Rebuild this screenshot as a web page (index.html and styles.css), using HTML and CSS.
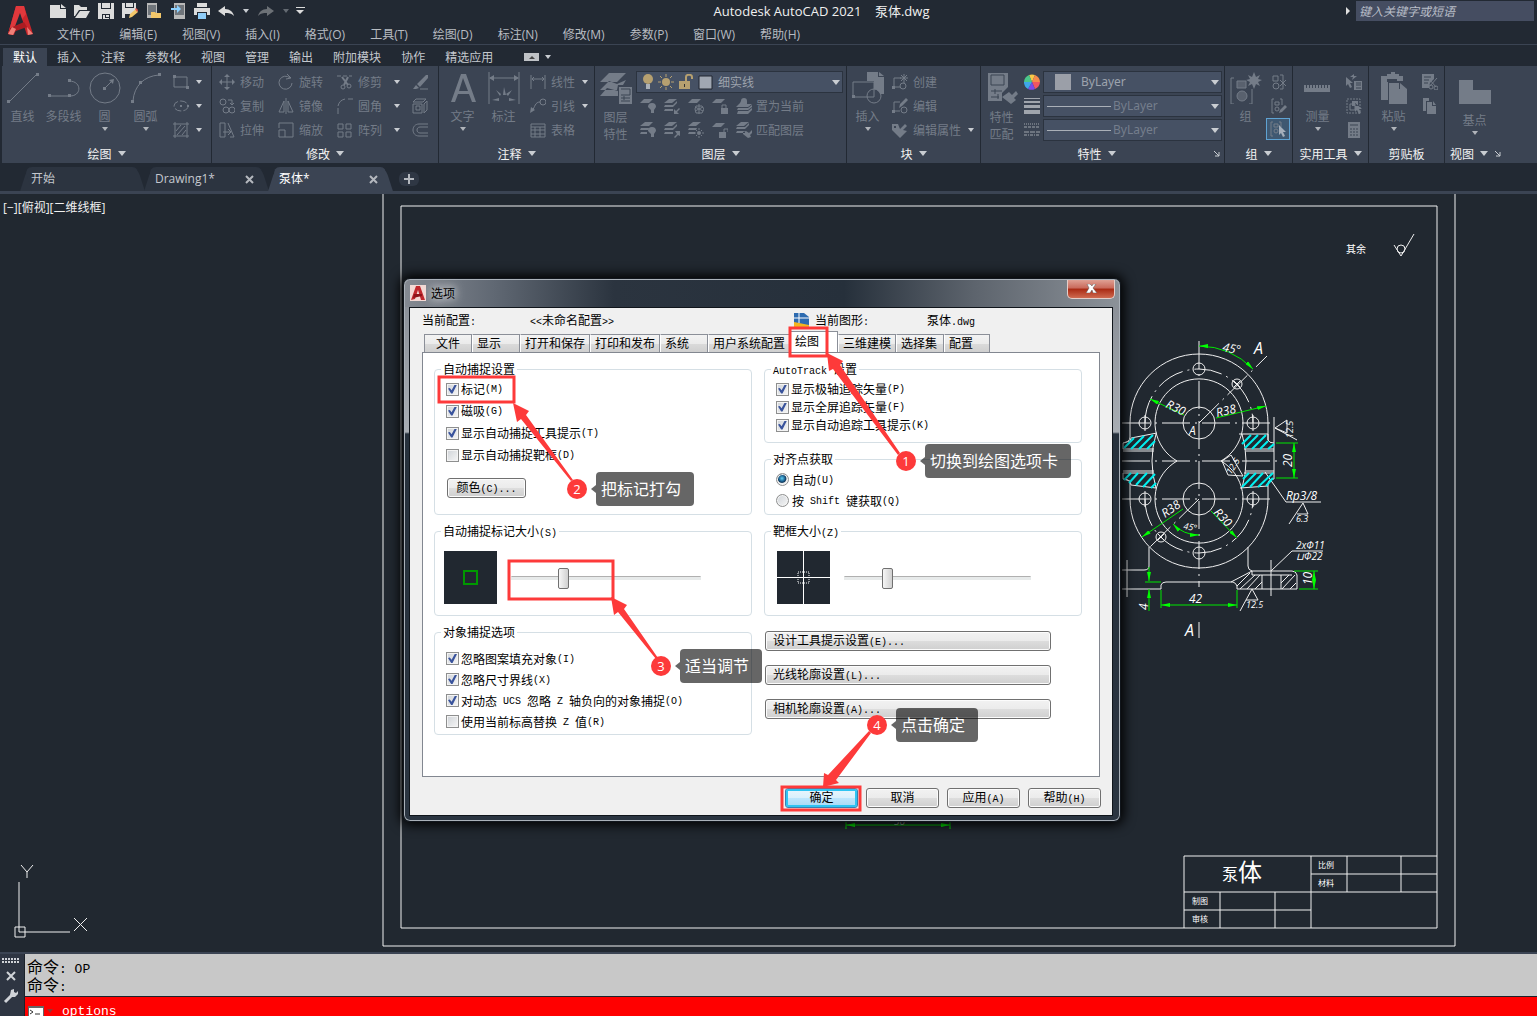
FILE: index.html
```html
<!DOCTYPE html>
<html lang="zh-CN">
<head>
    <meta charset="UTF-8">
    <title>Autodesk AutoCAD 2021 - 泵体.dwg</title>
    <meta name="viewport" content="width=device-width, initial-scale=1">
    <link rel="stylesheet" href="styles.css">
</head>
<body>
<div class="app">
    <header class="top">
        <svg class="logo" width="28" height="32" viewBox="0 0 28 32">
            <path d="M10 1h8l9 28-6 1L14 9 8 30l-6-1z" fill="#c9252b"/>
            <path d="M10 1h8l2 8-6 8-7 7-5 5z" fill="#e0383c"/>
            <path d="M14 8l4 12-10 4z" fill="#222933"/>
            <path d="M4 23l14-6 3 5-11 4-4 4-4-1z" fill="#ab1c22"/>
            <path d="M6 22l-4 7 5 1 3-6zM21 22l6 7-5 1z" fill="#f08078"/>
        </svg>
        <div class="bars">
            <div class="titlebar">
                <div class="qat">
                    <button aria-label="新建"><svg class="i16 f" viewBox="0 0 16 16"><path d="M0 2h10v4h6v9H0zM11 1l5 4h-5z"/></svg></button>
                    <button aria-label="打开"><svg class="i16 f" viewBox="0 0 16 16"><path d="M0 2h5l2 2h6v3H5L1 13H0zM6 8h10l-4 7H1z"/></svg></button>
                    <button aria-label="保存"><svg class="i16 f" viewBox="0 0 16 16"><path d="M0 0h3v6h10V0h3v16h-4v-5H4v5H0zM4 0h8v5H4zM5 12h2v3h4v1H5zM8 12h3v2H8z"/></svg></button>
                    <button aria-label="另存为"><svg class="i16 f" viewBox="0 0 16 16"><path d="M0 0h3v5h9V0h2v7l-4 4H3v4H0zM4 0h7v4H4z"/><path d="M7 15l1-4 6-5 2 3-6 5z" fill="#f3c76a"/><path d="M13 6l1-1 2 2-1 2z" fill="#e85a4f"/></svg></button>
                    <button aria-label="从 Web 打开"><svg class="i16 f" viewBox="0 0 16 16"><path d="M1 0h10v15H1z" fill="#b9b9b9"/><path d="M2 2h8v10H2z" fill="#70757b"/><path d="M5 9h4l1 1h5v5H5z" fill="#f3c76a"/></svg></button>
                    <button aria-label="保存到 Web"><svg class="i16 f" viewBox="0 0 16 16"><path d="M4 0h11v16H4z" fill="#b9b9b9"/><path d="M5 2h9v10H5z" fill="#70757b"/><path d="M1 5h6V2l4 4-4 4V7H1z" fill="#8cd0ff"/></svg></button>
                    <button aria-label="打印"><svg class="i16 f" viewBox="0 0 16 16"><path d="M3 0h10v4H3zM0 5h16v7h-3v-3H3v3H0z"/><path d="M4 10h8v6H4z" fill="#8fcdf8"/></svg></button>
                    <button aria-label="放弃"><svg class="i16 f" viewBox="0 0 16 16"><path d="M0 8l7-5v3c5 0 8 3 9 7-3-3-5-3-9-3v3z"/></svg></button>
                    <span class="caret"></span>
                    <button aria-label="重做" class="dim"><svg class="i16 f" viewBox="0 0 16 16"><path d="M16 8L9 3v3c-5 0-8 3-9 7 3-3 5-3 9-3v3z"/></svg></button>
                    <span class="caret dim"></span>
                    <button aria-label="自定义" class="more"><svg width="10" height="8" viewBox="0 0 10 8" class="f"><path d="M1 0h9v1H1zM1 3h8L5 7z"/></svg></button>
                </div>
                <h1>Autodesk AutoCAD 2021 &nbsp;&nbsp; 泵体.dwg</h1>
                <div class="search">
                    <span class="tri"></span>
                    <input type="text" aria-label="搜索" placeholder="键入关键字或短语">
                </div>
            </div>
            <nav class="menubar">
                <a href="#">文件(F)</a><a href="#">编辑(E)</a><a href="#">视图(V)</a><a href="#">插入(I)</a><a href="#">格式(O)</a><a href="#">工具(T)</a><a href="#">绘图(D)</a><a href="#">标注(N)</a><a href="#">修改(M)</a><a href="#">参数(P)</a><a href="#">窗口(W)</a><a href="#">帮助(H)</a>
            </nav>
        </div>
    </header>

    <nav class="ribbon-tabs">
        <a href="#" class="active">默认</a><a href="#">插入</a><a href="#">注释</a><a href="#">参数化</a><a href="#">视图</a><a href="#">管理</a><a href="#">输出</a><a href="#">附加模块</a><a href="#">协作</a><a href="#">精选应用</a>
        <button class="collapse" aria-label="最小化功能区"><span></span></button>
        <span class="caret"></span>
    </nav>

    <div class="ribbon">
        <section class="panel p-draw">
            <div class="tools">
                <button class="big"><svg class="i32" viewBox="0 0 32 32"><path d="M3 29L29 3"/><path class="f" d="M0 28h3v3H0zM29 1h3v3h-3z"/></svg>直线</button>
                <button class="big"><svg class="i32" viewBox="0 0 32 32"><path d="M2 24h19M21 9c13 0 13 15 1 15"/><path class="f" d="M0 22h3v3H0zM20 22h3v3h-3zM20 7h3v3h-3z"/></svg>多段线</button>
                <button class="big"><svg class="i32" viewBox="0 0 32 32"><circle cx="16" cy="16" r="15"/><path d="M16 16l8-8"/><path class="f" d="M14 15h3v3h-3zM20 8l5-1-1 5z"/></svg>圆<span class="caret"></span></button>
                <button class="big"><svg class="i32" viewBox="0 0 32 32"><path d="M3 29C4 14 14 4 29 3"/><path class="f" d="M1 28h3v3H1zM9 9h3v3H9zM28 1h3v3h-3z"/></svg>圆弧<span class="caret"></span></button>
                <div class="col c-draw">
                    <button class="small" aria-label="矩形"><svg class="i16" viewBox="0 0 16 16"><path d="M1 3h13v10H1z"/><path class="f" d="M0 1h3v3H0zM13 12h3v3h-3z"/></svg><span class="caret"></span></button>
                    <button class="small" aria-label="椭圆"><svg class="i16" viewBox="0 0 16 16"><ellipse cx="8" cy="8" rx="7" ry="5" stroke-dasharray="7 2"/><path class="f" d="M7 7h2v2H7zM14 7h2v2h-2z"/></svg><span class="caret"></span></button>
                    <button class="small" aria-label="图案填充"><svg class="i16" viewBox="0 0 16 16"><path d="M2 0v16M14 0v16M0 2h16M0 14h16M3 9l5-6M4 13l8-9M9 13l4-5"/></svg><span class="caret"></span></button>
                </div>
            </div>
            <h2>绘图<span class="caret"></span></h2>
        </section>

        <section class="panel p-modify">
            <div class="tools">
                <div class="col">
                    <button class="small"><svg class="i16" viewBox="0 0 16 16"><path d="M8 1v14M1 8h14"/><path class="f" d="M5 3l3-3 3 3zM5 13l3 3 3-3zM3 5L0 8l3 3zM13 5l3 3-3 3z"/></svg>移动</button>
                    <button class="small"><svg class="i16" viewBox="0 0 16 16"><circle cx="4" cy="4" r="3"/><circle cx="7" cy="12" r="3"/><circle cx="13" cy="12" r="3"/><path d="M9 2h4v4M11 5l2 2 2-2"/></svg>复制</button>
                    <button class="small"><svg class="i16" viewBox="0 0 16 16"><path d="M1 1h5v14H1zM9 1l6 14h-4M4 10h7M9 7l3 3-3 3"/></svg>拉伸</button>
                </div>
                <div class="col">
                    <button class="small"><svg class="i16" viewBox="0 0 16 16"><path d="M12 4a6.500 6.500 0 1 0 2 5M9 0l4 4-5 1"/></svg>旋转</button>
                    <button class="small"><svg class="i16" viewBox="0 0 16 16"><path d="M6 3v11H1zM10 3v11h5zM8 0v16"/></svg>镜像</button>
                    <button class="small"><svg class="i16" viewBox="0 0 16 16"><path d="M1 6V1h14v14H7M1 8h6v7H1z"/></svg>缩放</button>
                </div>
                <div class="col c-trim">
                    <button class="small"><svg class="i16" viewBox="0 0 16 16"><path d="M0 2h4M6 2h4M12 2h3"/><path stroke-width="2" d="M5 3l6 8M11 3L7 11"/><circle cx="6" cy="13" r="2"/><circle cx="12" cy="12" r="2"/></svg>修剪<span class="caret"></span></button>
                    <button class="small"><svg class="i16" viewBox="0 0 16 16"><path d="M1 16v-6M1 8c1-4 3-6 7-7M11 1h5"/></svg>圆角<span class="caret"></span></button>
                    <button class="small"><svg class="i16" viewBox="0 0 16 16"><path d="M1 2h5v5H1zM9 2h5v5H9zM1 10h5v5H1zM9 10h5v5H9z"/></svg>阵列<span class="caret"></span></button>
                </div>
                <div class="col">
                    <button class="small" aria-label="删除"><svg class="i16" viewBox="0 0 16 16"><path class="f" d="M5 10L14 1h2v3l-8 9zM4 11l3 3-3 1H1z"/><path d="M8 15h8"/></svg></button>
                    <button class="small" aria-label="分解"><svg class="i16" viewBox="0 0 16 16"><path d="M1 6h9v9H1zM4 8h4v4H4zM1 4l3-3h10l-3 3zM12 6l3-3v9l-3 3z"/></svg></button>
                    <button class="small" aria-label="偏移"><svg class="i16" viewBox="0 0 16 16"><path d="M16 2H7c-8 0-8 12 0 12h9M16 5H8c-4 0-4 6 0 6h8"/></svg></button>
                </div>
            </div>
            <h2>修改<span class="caret"></span></h2>
        </section>

        <section class="panel p-annot">
            <div class="tools">
                <button class="big"><svg class="i32" viewBox="0 0 32 32"><path class="f" d="M14 2h5l10 28h-4l-3-8H11l-3 8H4zM16 6l-4 13h9z"/></svg>文字<span class="caret"></span></button>
                <button class="big"><svg class="i32" viewBox="0 0 32 32"><path d="M1 0v32M31 0v32M2 6h28"/><path class="f" d="M1 6l5-3v6zM31 6l-5-3v6zM15 23l1-8 2 8zM8 18l4 6 1-2zM24 18l-4 6-2-2zM4 28l7-2v3zM28 28l-7-2v3z"/></svg>标注</button>
                <div class="col c-annot">
                    <button class="small"><svg class="i16" viewBox="0 0 16 16"><path d="M1 1v14M15 1v14M2 5h12M4 3L2 5l2 2M12 3l2 2-2 2"/></svg>线性<span class="caret"></span></button>
                    <button class="small"><svg class="i16" viewBox="0 0 16 16"><circle cx="13" cy="4" r="3"/><path d="M10 4C5 4 5 9 2 13"/><path class="f" d="M0 15l1-6 4 3z"/></svg>引线<span class="caret"></span></button>
                    <button class="small"><svg class="i16" viewBox="0 0 16 16"><path d="M1 2h14v13H1zM1 5h14M1 8h14M1 12h14M5 5v10M10 5v10"/></svg>表格</button>
                </div>
            </div>
            <h2>注释<span class="caret"></span></h2>
        </section>

        <section class="panel p-layer">
            <div class="tools">
                <button class="big two"><svg class="i32" viewBox="0 0 32 32"><path class="f" d="M9 1h17l-9 9H0zM9 9l-9 9h17l1-5h5l3-5-9 4zM7 16l-7 8h18v-5zM19 15h13v17H19z"/><path class="cut" d="M21 17h9v6h-9M21 26h9M24 24v4M21 29h9"/></svg>图层<br>特性</button>
                <div class="grow">
                    <div class="combo">
                        <svg class="bulbs" width="72" height="16" viewBox="0 0 72 16"><circle cx="7" cy="5" r="5" fill="#b6a070"/><path d="M5 10h4v5H5z" fill="#aab0b8"/><circle cx="25" cy="8" r="4" fill="#b6a070"/><path d="M25 0v3M25 13v3M17 8h3M30 8h3M19 2l2 2M31 2l-2 2M19 14l2-2M31 14l-2-2" stroke="#b6a070"/><path d="M38 7h11v8H38z" fill="#b6a070"/><path d="M45 7V3c0-3 6-3 6 0v2" fill="none" stroke="#b6a070" stroke-width="2"/><path d="M43 10h1v3h-1z" fill="#333"/><path d="M58 2h13v13H58z" fill="#a0a7b2" stroke="#202630"/></svg>
                        <select aria-label="图层"><option>细实线</option></select>
                    </div>
                    <div class="iconrow">
                        <button aria-label="关"><svg class="i16" viewBox="0 0 16 16"><path class="f" d="M4 1h9L9 5H0zM8 9a4 4 0 1 1 8 0l-2 3v3h-3v-3z"/></svg></button>
                        <button aria-label="隔离"><svg class="i16" viewBox="0 0 16 16"><path class="f" d="M5 1h8L8 5H0zM1 7h8l4-4v2L9 9H0zM1 11h8v2H0zM10 11v5h5l-2-2 3-3-1-1-3 3z"/></svg></button>
                        <button aria-label="冻结"><svg class="i16" viewBox="0 0 16 16"><path class="f" d="M4 1h9L9 5H0z"/><path d="M11 6v10M7 9l8 4M15 9l-8 4M8 8h6l2 3-2 4H8l-1-4z"/></svg></button>
                        <button aria-label="锁定"><svg class="i16" viewBox="0 0 16 16"><path class="f" d="M4 1h9L9 5H0zM9 10h7v6H9z"/><path d="M10 10V7h4v3"/></svg></button>
                        <button class="wide"><svg class="i16" viewBox="0 0 16 16"><path class="f" d="M5 3a3 3 0 1 1 6 0v3h5l-4 3H0l4-4zM2 10h10l4-3v2l-4 3H1zM2 13h10l4-3v2l-4 4H1z"/></svg>置为当前</button>
                    </div>
                    <div class="iconrow">
                        <button aria-label="打开所有图层"><svg class="i16" viewBox="0 0 16 16"><path class="f" d="M5 0h8L9 4H0zM1 6h8l-1 2H0zM1 10h6v2H0zM8 9a4 4 0 1 1 8 0l-2 3v3h-3v-3z"/></svg></button>
                        <button aria-label="取消隔离"><svg class="i16" viewBox="0 0 16 16"><path class="f" d="M5 0h8L8 4H0zM1 6h8l4-4v2L9 8H0zM1 10h8v2H0zM16 9v5l-2-1-3 3-1-1 3-3-2-3z"/></svg></button>
                        <button aria-label="解冻"><svg class="i16" viewBox="0 0 16 16"><path class="f" d="M5 0h8L8 4H0zM1 6h8l-1 2H0zM1 10h6v2H0z"/><circle class="f" cx="11" cy="11" r="2"/><path d="M11 6v2M11 14v2M6 11h2M14 11h2M8 8l1 1M14 8l-1 1M8 14l1-1M14 14l-1-1"/></svg></button>
                        <button aria-label="解锁"><svg class="i16" viewBox="0 0 16 16"><path class="f" d="M4 1h9L9 5H0zM7 10h7v6H7z"/><path d="M12 10V7h4v3"/></svg></button>
                        <button class="wide"><svg class="i16" viewBox="0 0 16 16"><path class="f" d="M5 0h8L8 4H0zM1 5h8l4-4v2L9 7H0zM1 9h8v2H0zM7 10l3-1 3 2 3-3v3l-2 2 1 2-3 1-5-4z"/></svg>匹配图层</button>
                    </div>
                </div>
            </div>
            <h2>图层<span class="caret"></span></h2>
        </section>

        <section class="panel p-block">
            <div class="tools">
                <button class="big"><svg class="i32" viewBox="0 0 32 32"><path class="f" d="M15 0h11v5h6v17h-4a8 8 0 0 0-6-5V9h-7zM27 0l5 4h-5z"/><path d="M1 10h21v15H1z"/><circle cx="22" cy="24" r="7"/><path class="f" d="M0 23h3v3H0z"/></svg>插入<span class="caret"></span></button>
                <div class="col c-block">
                    <button class="small"><svg class="i16" viewBox="0 0 16 16"><path d="M9 4H2v9h6"/><circle cx="11" cy="12" r="3"/><path d="M12 0v9M8 4h8M9 1l6 6M15 1L9 7"/><path class="f" d="M0 12h3v3H0z"/></svg>创建</button>
                    <button class="small"><svg class="i16" viewBox="0 0 16 16"><path d="M8 4H2v9h6"/><circle cx="12" cy="12" r="3"/><path class="f" d="M7 10l1-4 6-6 2 2-6 6zM0 12h3v3H0z"/></svg>编辑</button>
                    <button class="small"><svg class="i16" viewBox="0 0 16 16"><path class="f" d="M0 2h6l2 5 5-5 2 2-4 4 4 1-7 7-8-8zM2 4v2h2V4z"/></svg>编辑属性<span class="caret"></span></button>
                </div>
            </div>
            <h2>块<span class="caret"></span></h2>
        </section>

        <section class="panel p-props">
            <div class="tools">
                <button class="big two"><svg class="i32" viewBox="0 0 32 32"><path class="f" d="M2 1h20v14l-6 6v8H2z"/><path class="f" d="M16 25l7-5 3 3 4-4 2 3-4 4 2 2-5 4z"/><path class="cut" d="M5 3h13v10H5zM5 19h11M9 17v5M5 25h8M12 22v5"/></svg>特性<br>匹配</button>
                <div class="proplist">
                    <div class="prop">
                        <svg class="i16 f" viewBox="0 0 16 16"><path d="M8 8L5 1a8 8 0 0 1 6 0z" fill="#f7c948"/><path d="M8 8l3-7a8 8 0 0 1 5 7z" fill="#f58a4b"/><path d="M8 8h8a8 8 0 0 1-5 7z" fill="#ef5661"/><path d="M8 8l3 7a8 8 0 0 1-7 0z" fill="#7a4be8"/><path d="M8 8l-4 7a8 8 0 0 1-4-7z" fill="#3fa7e9"/><path d="M8 8H0a8 8 0 0 1 5-7z" fill="#4bc78a"/></svg>
                        <div class="combo"><span class="swatch"></span><select aria-label="颜色"><option>ByLayer</option></select></div>
                    </div>
                    <div class="prop">
                        <svg class="i16 f" viewBox="0 0 16 16"><path d="M0 0h16v1H0zM0 3h16v2H0zM0 7h16v3H0zM0 12h16v4H0z"/></svg>
                        <div class="combo line"><span class="rule"></span><select aria-label="线宽"><option>ByLayer</option></select></div>
                    </div>
                    <div class="prop">
                        <svg class="i16" viewBox="0 0 16 16"><path stroke-dasharray="1 1" d="M0 2h16"/><path stroke-dasharray="3 1" d="M0 5h16"/><path stroke-dasharray="5 1" d="M0 10h16"/><path stroke-dasharray="3 1 1 1" d="M0 13h16"/></svg>
                        <div class="combo line"><span class="rule"></span><select aria-label="线型"><option>ByLayer</option></select></div>
                    </div>
                </div>
            </div>
            <h2>特性<span class="caret"></span><button class="launch" aria-label="特性设置"><svg width="6" height="6" viewBox="0 0 6 6"><path d="M0 0l5 5M5 1v4H1"/></svg></button></h2>
        </section>

        <section class="panel p-group">
            <div class="tools">
                <button class="big"><svg class="i32" viewBox="0 0 32 32"><path d="M4 6H1v26h3M19 32h3V17"/><path class="soft" d="M7 9h9v7H7z"/><circle class="soft" cx="12" cy="24" r="5"/><path class="f" d="M24 0l2 5 4-2-2 4 4 1-4 2 2 4-4-2-2 5-2-5-4 2 2-4-4-2 4-1-2-4 4 2z"/></svg>组</button>
                <div class="col c-group">
                    <button class="small" aria-label="解除编组"><svg class="i16" viewBox="0 0 16 16"><path d="M2 2h5v5H2zM9 1h3v14H9M9 6l6 6M15 6l-6 6"/><circle cx="5" cy="12" r="3"/></svg></button>
                    <button class="small" aria-label="组编辑"><svg class="i16" viewBox="0 0 16 16"><path d="M3 1H1v14h2M9 1h2v6M4 4h4v3H4z"/><circle cx="6" cy="11" r="2"/><path class="f" d="M8 15l1-3 5-5 2 2-5 5z"/></svg></button>
                    <button class="small on" aria-label="启用组选择"><svg class="i16" viewBox="0 0 16 16"><path d="M3 1H1v14h2M9 1h2v5M4 3h4v3H4z"/><circle cx="6" cy="10" r="2"/><path class="lit" d="M9 4v10l2-2 2 4 2-1-2-4h3z"/></svg></button>
                </div>
            </div>
            <h2>组<span class="caret"></span></h2>
        </section>

        <section class="panel p-util">
            <div class="tools">
                <button class="big"><svg class="i32" viewBox="0 0 32 32"><path class="f" d="M2 13h2v3h1v-3h2v3h1v-3h2v3h1v-3h2v3h1v-3h2v3h1v-3h2v3h1v-3h2v3h1v-3h2v3h1v-3h2v7H2z"/></svg>测量<span class="caret"></span></button>
                <div class="col c-util">
                    <button class="small" aria-label="快速选择"><svg class="i16" viewBox="0 0 16 16"><path class="f" d="M0 3v9l2-2 2 4 2-1-2-4h3zM8 0l-4 3h3l-1 3 5-4H8zM8 7h8v9H8z"/><path class="cut" d="M10 9h5M10 11h5M10 14h5"/></svg></button>
                    <button class="small" aria-label="全部选择"><svg class="i16" viewBox="0 0 16 16"><path stroke-dasharray="2 1" d="M1 1h13v14H1z"/><path d="M4 6h5v6H4z"/><path class="f" d="M6 3h6v5H6zM9 5v9l2-2 2 4 2-1-2-4h3z"/></svg></button>
                    <button class="small" aria-label="快速计算器"><svg class="i16" viewBox="0 0 16 16"><path class="f" d="M2 0h12v16H2z"/><path class="cut" d="M4 3h8M4 7h2M7 7h2M10 7h2M4 10h2M7 10h2M10 10h2M4 13h2M7 13h2M10 13h2"/></svg></button>
                </div>
            </div>
            <h2>实用工具<span class="caret"></span></h2>
        </section>

        <section class="panel p-clip">
            <div class="tools">
                <button class="big"><svg class="i32" viewBox="0 0 32 32"><path class="f" d="M3 4h6V2h4V0h4v2h4v2h4v5h-6v-2H9v3h1v18H3z"/><path class="f" d="M11 11h10v6h8v15H11zM22 11l7 6h-7z"/></svg>粘贴<span class="caret"></span></button>
                <div class="col c-clip">
                    <button class="small" aria-label="剪切"><svg class="i16" viewBox="0 0 16 16"><path class="f" d="M0 0h12v5L8 9l-1 5H0z"/><path class="cut" d="M2 3h7M2 6h5M2 9h4"/><path d="M8 6l6 7M15 4l-7 8"/><circle cx="9" cy="13" r="2"/><circle cx="14" cy="14" r="2"/></svg></button>
                    <button class="small" aria-label="复制剪裁"><svg class="i16" viewBox="0 0 16 16"><path class="f" d="M1 0h6v3H4v10H1zM5 4h5v4h4v8H5zM11 3l3 4h-3z"/></svg></button>
                </div>
            </div>
            <h2>剪贴板</h2>
        </section>

        <section class="panel p-view">
            <div class="tools">
                <button class="big base"><svg class="i32" viewBox="0 0 32 32"><path class="f" d="M0 4h14v10h18v14H0z"/></svg>基点<span class="caret"></span></button>
            </div>
            <h2>视图<span class="caret"></span><button class="launch" aria-label="视图设置"><svg width="6" height="6" viewBox="0 0 6 6"><path d="M0 0l5 5M5 1v4H1"/></svg></button></h2>
        </section>
    </div>

    <div class="file-tabs">
        <a href="#" class="file-tab"><span>开始</span></a>
        <a href="#" class="file-tab"><span>Drawing1*</span><svg width="9" height="9" viewBox="0 0 9 9"><path d="M1 1l7 7M8 1L1 8"/></svg></a>
        <a href="#" class="file-tab active"><span>泵体*</span><svg width="9" height="9" viewBox="0 0 9 9"><path d="M1 1l7 7M8 1L1 8"/></svg></a>
        <button class="add" aria-label="新图形"><svg width="10" height="10" viewBox="0 0 10 10"><path d="M5 0v10M0 5h10"/></svg></button>
    </div>

    <main class="canvas">
        <svg class="drawing" width="100%" height="100%">
            <defs>
                <marker id="arr" viewBox="0 0 9 4" refX="9" refY="2" markerWidth="9" markerHeight="4" orient="auto-start-reverse"><path d="M0 0l9 2-9 2z" fill="#0f0"/></marker>
            </defs>
            <g transform="translate(0 -194)">
                <!-- sheet frame and title block -->
                <g class="ln">
                    <path d="M383 190V946H1455V190M401 206H1437V928H401z"/>
                    <path d="M1184 928V856H1437M1311 856V928M1311 874H1437M1184 892H1437M1184 910H1311M1220 892V928M1275 892V928M1347 856V892M1401 856V892"/>
                    <path d="M1394 245l7 11 13-22"/><circle cx="1401" cy="249" r="4"/>
                </g>
                <g class="cn">
                    <text x="1346" y="253" font-size="10">其余</text>
                    <text x="1222" y="880" font-size="16">泵</text><text x="1238" y="881" font-size="24">体</text>
                    <text x="1318" y="868" font-size="8">比例</text><text x="1318" y="886" font-size="8">材料</text>
                    <text x="1192" y="904" font-size="8">制图</text><text x="1192" y="922" font-size="8">审核</text>
                </g>

                <!-- pump body -->
                <g class="ln">
                    <path d="M1130 437V423a69 69 0 0 1 138 0V440q1 3 6 3V479q-6 0-6 5V499a69 69 0 0 1-138 0V484q0-5-7-5M1130 437q0 5-7 6"/>
                    <path d="M1177 461a44 44 0 1 1 44 0M1177 461a44 44 0 1 0 44 0M1156 434q-8 27 0 54M1242 434q8 27 0 54"/>
                    <circle cx="1199" cy="423" r="16"/><circle cx="1199" cy="499" r="16"/>
                    <circle cx="1199" cy="369" r="6"/><circle cx="1145" cy="423" r="6"/><circle cx="1253" cy="423" r="6"/>
                    <circle cx="1145" cy="499" r="6"/><circle cx="1253" cy="499" r="6"/><circle cx="1199" cy="553" r="6"/>
                    <circle cx="1237" cy="384" r="5"/><path d="M1234 381l6 6M1240 381l-6 6"/>
                    <circle cx="1161" cy="537" r="5"/><path d="M1158 534l6 6M1164 534l-6 6"/>
                    <path d="M1145 415v16M1253 415v16M1145 491v16M1253 491v16"/>
                    <path d="M1123 449h31M1123 451h31M1123 471h31M1123 473h31M1244 449h30M1246 451h28M1246 471h28M1244 473h30M1274 417V443"/>
                    <path d="M1157 433l-26 5-1 3-7 2v6M1123 473v6l7 2 1 4 25 3M1239 434h29v6M1243 473M1268 486l-28 2"/>
                    <path d="M1149 547v19q0 4-5 4h-22M1122 589h39v-4q1-3 5-3h67q3 1 4 4v3h60v-14q-1-4-5-4h-40q-4-1-4-5v-19M1231 582l21-11v4h40M1262 575v14M1281 575v14M1271 560v36M1127 560v37"/>
                    <path d="M1237 586l13-13M1240 589l15-14M1247 589l13-14M1255 589l7-7M1281 583l8-8M1282 589l13-14M1290 589l6-6"/>
                    <path d="M1265 472l21 30h35M1289 524l14-21 5 11h-11M1275 428l12-8v13zM1275 428l22 12M1222 461l9-6 12 21-15-1zM1271 571l21-20h31M1240 611l12-22 6 11h-12M1199 622v16"/>
                    <path class="cl" d="M1199 341V587M1122 423h150M1122 499h150M1122 461h156M1199 423l68-67M1199 499l-49 48"/>
                    <path class="cl" d="M1145 423a54 54 0 0 1 108 0M1145 499a54 54 0 0 0 108 0"/>
                </g>
                <!-- cut faces of the flanges -->
                <path class="hatch" d="M1124 448l10-10M1131 449l13-13M1139 449l14-14M1147 449l8-8M1124 480l7-7M1129 483l9-10M1136 485l11-12M1143 487l12-13M1151 488l5-5M1242 444l9-9M1245 448l13-13M1252 449l14-14M1260 449l8-8M1268 449l6-5M1243 479l6-6M1242 487l14-14M1250 487l13-14M1258 487l15-14M1266 486l7-8"/>

                <!-- dimensions -->
                <g class="dim-ln">
                    <path marker-start="url(#arr)" marker-end="url(#arr)" d="M1199 346a77 77 0 0 1 54 23"/>
                    <path marker-start="url(#arr)" marker-end="url(#arr)" d="M1173 524a36 36 0 0 0 26 11"/>
                    <path marker-end="url(#arr)" d="M1184 415l-34-16"/><path marker-end="url(#arr)" d="M1216 418l50-12"/>
                    <path marker-end="url(#arr)" d="M1183 509l-41 28"/><path marker-end="url(#arr)" d="M1211 511l26 27"/>
                    <path marker-start="url(#arr)" marker-end="url(#arr)" d="M1294 443v35"/><path d="M1276 443h22M1276 478h22"/>
                    <path marker-start="url(#arr)" marker-end="url(#arr)" d="M1314 571v18"/><path d="M1294 571h24M1299 589h19"/>
                    <path marker-start="url(#arr)" marker-end="url(#arr)" d="M1161 605h76"/><path d="M1161 590v18M1237 590v18"/>
                    <path marker-end="url(#arr)" d="M1149 567v14"/><path marker-end="url(#arr)" d="M1149 611v-22"/><path d="M1145 582h16"/>
                    <path marker-start="url(#arr)" marker-end="url(#arr)" d="M846 825h104"/><path d="M846 821v8M950 821v8"/>
                </g>
                <g class="dimtx">
                    <text transform="translate(1222 351) rotate(10)">45°</text>
                    <text x="1254" y="354" font-size="16">A</text><text x="1189" y="435">A</text><text x="1185" y="636" font-size="16">A</text>
                    <text transform="translate(1165 407) rotate(26)">R30</text>
                    <text transform="translate(1217 417) rotate(-13)">R38</text>
                    <text transform="translate(1165 518) rotate(-35)">R38</text>
                    <text transform="translate(1213 513) rotate(46)">R30</text>
                    <text transform="translate(1183 529) rotate(10)" font-size="9">45°</text>
                    <text transform="translate(1292 467) rotate(-90)">20</text>
                    <text transform="translate(1293 438) rotate(-90)" font-size="9">12.5</text>
                    <text transform="translate(1231 475) rotate(-58)" font-size="9">12.5</text>
                    <text x="1286" y="500">Rp3/8</text><text x="1296" y="522" font-size="9">6.3</text>
                    <text x="1296" y="549" font-size="10">2xΦ11</text><text x="1296" y="560" font-size="10">⊔Φ22</text>
                    <text transform="translate(1312 585) rotate(-90)">10</text>
                    <text x="1189" y="603">42</text>
                    <text transform="translate(1148 610) rotate(-90)">4</text>
                    <text x="1246" y="608" font-size="9">12.5</text>
                    <text x="894" y="825" font-size="10" opacity=".6">36</text>
                </g>

                <!-- UCS icon -->
                <g class="ln">
                    <path d="M19 882V932H70M15 927h10v10H15zM21 865l6 7v6M33 865l-6 7M74 918l13 13M87 918l-13 13"/>
                </g>
            </g>
        </svg>
        <div class="view-label">[−][俯视][二维线框]</div>

        <div class="dialog" role="dialog" aria-labelledby="dlg-title">
            <div class="dlg-head">
                <svg width="16" height="16" viewBox="0 0 16 16"><path d="M0 0h16v16H0z" fill="#f3d9d5"/><path d="M6 1h4l5 14h-4L8 5l-3 9-4 1z" fill="#c0272d"/><path d="M4 9h8v2l-9 2z" fill="#8e1218"/></svg>
                <span id="dlg-title">选项</span>
                <button class="close" aria-label="关闭"><svg width="11" height="9" viewBox="0 0 11 9"><path d="M1 0h3l2 2 1-2h3L7 4l4 5H7L6 6 4 9H0l3-5z" fill="#fff" stroke="#555" stroke-width=".5"/></svg></button>
            </div>
            <div class="dlg-body">
                <div class="config">
                    <span>当前配置<i>:</i></span><span><i>&lt;&lt;</i>未命名配置<i>&gt;&gt;</i></span>
                    <svg width="15" height="14" viewBox="0 0 15 14"><path d="M0 0h10l5 4v10H0z" fill="#2d6bb0"/><path d="M0 9l15 3v2H0z" fill="#f2b61f"/><path d="M5 0v10M0 5h15" stroke="#fff"/></svg>
                    <span>当前图形<i>:</i></span><span>泵体<i>.dwg</i></span>
                </div>
                <div class="dlg-tabs" role="tablist">
                    <button role="tab" class="w48 mid">文件</button><button role="tab" class="w48">显示</button><button role="tab" class="w70">打开和保存</button><button role="tab" class="w70">打印和发布</button><button role="tab" class="w48">系统</button><button role="tab" class="w82">用户系统配置</button><button role="tab" class="w48 sel" aria-selected="true">绘图</button><button role="tab" class="w58">三维建模</button><button role="tab" class="w48">选择集</button><button role="tab" class="w46">配置</button>
                </div>
                <div class="dlg-panel">
                    <div class="stack">
                        <fieldset class="g-snap">
                            <legend>自动捕捉设置</legend>
                            <label><input type="checkbox" checked>标记<i>(M)</i></label>
                            <label><input type="checkbox" checked>磁吸<i>(G)</i></label>
                            <label><input type="checkbox" checked>显示自动捕捉工具提示<i>(T)</i></label>
                            <label><input type="checkbox">显示自动捕捉靶框<i>(D)</i></label>
                            <button class="btn color">颜色<i>(C)...</i></button>
                        </fieldset>
                        <fieldset class="g-size">
                            <legend>自动捕捉标记大小<i>(S)</i></legend>
                            <svg width="53" height="53" viewBox="0 0 53 53"><path d="M0 0h53v53H0z" fill="#212830"/><path d="M20 20h13v13H20z" fill="none" stroke="#009900" stroke-width="2"/></svg>
                            <input type="range" min="0" max="100" value="26" aria-label="自动捕捉标记大小">
                        </fieldset>
                        <fieldset class="g-osnap">
                            <legend>对象捕捉选项</legend>
                            <label><input type="checkbox" checked>忽略图案填充对象<i>(I)</i></label>
                            <label><input type="checkbox" checked>忽略尺寸界线<i>(X)</i></label>
                            <label><input type="checkbox" checked>对动态<i> UCS </i>忽略<i> Z </i>轴负向的对象捕捉<i>(O)</i></label>
                            <label><input type="checkbox">使用当前标高替换<i> Z </i>值<i>(R)</i></label>
                        </fieldset>
                    </div>
                    <div class="stack">
                        <fieldset class="g-track">
                            <legend><i>AutoTrack </i>设置</legend>
                            <label><input type="checkbox" checked>显示极轴追踪矢量<i>(P)</i></label>
                            <label><input type="checkbox" checked>显示全屏追踪矢量<i>(F)</i></label>
                            <label><input type="checkbox" checked>显示自动追踪工具提示<i>(K)</i></label>
                        </fieldset>
                        <fieldset class="g-align">
                            <legend>对齐点获取</legend>
                            <label><input type="radio" name="align" checked>自动<i>(U)</i></label>
                            <label><input type="radio" name="align">按<i> Shift </i>键获取<i>(Q)</i></label>
                        </fieldset>
                        <fieldset class="g-size apert">
                            <legend>靶框大小<i>(Z)</i></legend>
                            <svg width="53" height="53" viewBox="0 0 53 53"><path d="M0 0h53v53H0z" fill="#212830"/><path d="M26 0h1v53h-1zM0 26h53v1H0z" fill="#fff"/><path d="M21 21h11v11H21z" fill="none" stroke="#fff" stroke-dasharray="1 1"/></svg>
                            <input type="range" min="0" max="100" value="21" aria-label="靶框大小">
                        </fieldset>
                        <div class="links">
                            <button class="btn">设计工具提示设置<i>(E)...</i></button>
                            <button class="btn">光线轮廓设置<i>(L)...</i></button>
                            <button class="btn">相机轮廓设置<i>(A)...</i></button>
                        </div>
                    </div>
                </div>
                <div class="dlg-foot">
                    <button class="btn ok">确定</button>
                    <button class="btn">取消</button>
                    <button class="btn">应用<i>(A)</i></button>
                    <button class="btn">帮助<i>(H)</i></button>
                </div>
            </div>
        </div>

        <!-- tutorial callouts -->
        <svg class="marks" width="100%" height="100%">
            <g transform="translate(0 -194)">
                <g fill="none" stroke="#fd3a3a" stroke-width="3">
                    <path d="M439 377h75v25h-75zM790 328h37v28h-37zM509 561h104v38H509zM782 787h78v23h-78z"/>
                </g>
                <g fill="#fd3a3a">
                    <path d="M827 353l16 8-3 4 60 88-2 2-65-86-4 2zM513 403l16 8-3 4 47 65-2 1-50-62-4 3zM611 597l16 8-3 4 34 49-2 1-38-47-4 3zM823 787l1-14 4 2 41-44 2 2-35 47 3 3z"/>
                    <circle cx="906" cy="461" r="10"/><circle cx="577" cy="489" r="10"/><circle cx="661" cy="666" r="10"/><circle cx="877" cy="725" r="10"/>
                </g>
                <g class="num"><text x="906" y="466">1</text><text x="577" y="494">2</text><text x="661" y="671">3</text><text x="877" y="730">4</text></g>
            </g>
        </svg>
        <div class="tip t1">切换到绘图选项卡</div>
        <div class="tip t2">把标记打勾</div>
        <div class="tip t3">适当调节</div>
        <div class="tip t4">点击确定</div>
    </main>

    <footer class="command">
        <div class="cmd-side">
            <svg width="18" height="6" viewBox="0 0 18 6"><path d="M0 1h18M0 4h18" stroke="#d0d3d8" stroke-width="2" stroke-dasharray="2 1"/></svg>
            <svg width="10" height="10" viewBox="0 0 10 10"><path d="M1 1l8 8M9 1L1 9" stroke="#d0d3d8" stroke-width="2"/></svg>
            <svg width="16" height="16" viewBox="0 0 16 16"><path d="M2 14l8-8" stroke="#d0d3d8" stroke-width="3"/><path d="M8 2l3-1v3l2 1 2-2v3l-3 3H9L7 7z" fill="#d0d3d8"/></svg>
        </div>
        <div class="cmd-main">
            <div class="history"><p>命令<i>: OP</i></p><p>命令<i>:</i></p></div>
            <label class="prompt">
                <svg width="16" height="11" viewBox="0 0 16 11"><path d="M0 0h16v11H0z" fill="#666"/><path d="M1 2h14v8H1z" fill="#fff"/><path d="M2 4l3 2-3 2M7 8h5" fill="none" stroke="#333"/></svg>
                <span class="caret"></span>
                <input type="text" value="options" aria-label="命令行">
            </label>
        </div>
    </footer>
</div>
</body>
</html>
```

FILE: styles.css
```css
:root {
    --bg: #222933;
    --canvas: #212830;
    --panel: #3b4453;
    --muted: #747c88;
    --text: #c4c8ce;
    --combo: #465164;
    --ui: "Open Sans", "Noto Sans CJK SC", sans-serif;
    --cjk: "Noto Sans CJK SC", sans-serif;
}
* { box-sizing: border-box; }
html, body { margin: 0; height: 100%; }
body {
    background: var(--bg);
    color: var(--text);
    font: 12px/16px var(--ui);
    overflow: hidden;
}
a { color: inherit; text-decoration: none; }
button, input, select { font: inherit; color: inherit; margin: 0; }
button { background: none; border: 0; padding: 0; }
svg { display: block; flex: none; }
h1, h2, p { margin: 0; font-size: inherit; font-weight: 400; }

.app { display: flex; flex-direction: column; height: 100vh; }
.caret {
    flex: none;
    width: 0;
    height: 0;
    border: 3px solid transparent;
    border-top: 4px solid #c9cdd2;
    border-bottom: 0;
}

/* title + menu */
.top { display: flex; border-bottom: 1px solid var(--panel); height: 45px; }
.logo { margin: 5px 16px 0 6px; }
.bars { flex: 1; }
.titlebar { display: flex; align-items: center; height: 22px; }
.qat { display: flex; align-items: center; gap: 8px; color: #dcdcdc; }
.qat .dim { opacity: .4; }
.qat .caret { margin: 0 1px; }
.qat .more { margin-left: -3px; }
.titlebar h1 { flex: 1; padding-right: 8px; text-align: center; font-size: 13px; color: #f0f0f0; }
.search { display: flex; align-items: center; gap: 6px; padding-right: 3px; }
.search .tri { border: 4px solid transparent; border-left-color: #e0e0e0; border-right: 0; }
.search input {
    width: 178px;
    height: 20px;
    padding: 0 3px;
    border: 0;
    background: #454d61;
    font-style: italic;
}
.search input::placeholder { color: #b9bec8; opacity: 1; }
.menubar { display: flex; gap: 25px; padding: 5px 0 0 7px; color: #b8bcc2; }

.ribbon-tabs { display: flex; align-items: center; height: 21px; padding: 3px 0 0 3px; font-family: var(--cjk); }
.ribbon-tabs a { padding: 1px 10px; }
.ribbon-tabs .active { background: var(--panel); color: #fff; }
.collapse { width: 15px; height: 8px; background: #bfc2c6; margin: 0 6px 0 21px; }
.collapse span { display: block; width: 6px; margin: 0 auto; border: 3px solid transparent; border-top: 0; border-bottom-color: #444; }

/* ribbon */
.ribbon { display: flex; gap: 1px; height: 97px; padding-left: 2px; font-family: var(--cjk); }
.panel { display: flex; flex-direction: column; background: var(--panel); color: var(--muted); flex: none; }
.tools { display: flex; flex: 1; padding-top: 4px; }
.panel h2 { display: flex; align-items: center; justify-content: center; gap: 6px; height: 20px; padding-top: 1px; color: #f2f2f2; }
.panel h2 .caret { border-width: 5px 4px 0; }
.p-draw { width: 209px; }
.p-modify { width: 226px; }
.p-annot { width: 155px; }
.p-layer { width: 251px; }
.p-block { width: 133px; }
.p-props { width: 243px; }
.p-group { width: 67px; }
.p-util { width: 75px; }
.p-clip { width: 75px; }
.p-view { flex: 1 1 90px; }
.panel.p-view h2 { justify-content: flex-start; padding-left: 5px; }
.i16 { width: 16px; height: 16px; fill: none; stroke: currentColor; }
.i32 { width: 32px; height: 32px; fill: none; stroke: currentColor; }
.f { fill: currentColor; stroke: none; fill-rule: evenodd; }
.cut { stroke: var(--panel); }
.soft { fill: #59616e; }
.lit { fill: #a5afbb; stroke: none; }
.big {
    display: flex;
    flex-direction: column;
    align-items: center;
    width: 41px;
    padding-top: 2px;
    line-height: 16px;
    flex: none;
    align-self: flex-start;
}
.big svg { margin-bottom: 4px; }
.big .caret { margin-top: 3px; border-top-color: #b0b4ba; }
.two { line-height: 17px; }
.base { margin: 4px 0 0 9px; }
.col { display: flex; flex-direction: column; }
.small { display: flex; align-items: center; gap: 5px; height: 24px; }
.small .caret { margin-left: 7px; }
.c-draw { padding-left: 7px; }
.c-draw .caret { margin-left: 2px; }
.p-modify .tools { padding-left: 7px; }
.p-modify .col { width: 59px; flex: none; }
.p-modify .c-trim { width: 75px; }
.p-annot .tools { padding-left: 3px; }
.c-annot { padding-left: 6px; }
.c-annot .caret { margin-left: 2px; }
.p-block .c-block { padding-left: 4px; }
.c-block .caret { margin-left: 2px; }
.small.on { width: 24px; height: 22px; padding-left: 3px; border: 1px solid #5fa3d3; background: #3f5871; }
.c-group .small:not(.on) { padding-left: 5px; }
.p-util .tools { padding-left: 4px; }
.c-util { padding-left: 8px; }
.p-clip .tools { padding-left: 4px; }
.c-clip { padding-left: 8px; }
.grow { flex: 1; padding-right: 3px; }
.combo {
    position: relative;
    display: flex;
    align-items: center;
    height: 22px;
    flex: 1;
    border: 1px solid #2b333f;
    background: var(--combo);
    color: #9da3ad;
}
.combo::after {
    content: "";
    border: 4px solid transparent;
    border-top: 5px solid #c9cdd2;
    border-bottom: 0;
    position: absolute;
    right: 2px;
    pointer-events: none;
}
.combo select { appearance: none; flex: 1; min-width: 0; border: 0; background: none; padding: 0 12px 0 0; }
.bulbs { margin: 0 5px 0 4px; }
.grow .combo { margin: 1px 0; }
.iconrow { display: flex; height: 24px; align-items: center; padding-left: 4px; gap: 8px; }
.iconrow .wide { display: flex; align-items: center; gap: 4px; }
.proplist { flex: 1; padding: 0 2px; }
.prop { display: flex; align-items: center; gap: 3px; height: 24px; font: 12px/16px "Noto Sans", sans-serif; color: #a0a5ad; }
.swatch { width: 16px; height: 16px; background: #9b9fa8; margin: 0 10px 0 11px; }
.rule { width: 64px; height: 1px; background: #aab0b8; margin: 0 2px 0 3px; }
.combo.line { color: #757e8c; }
.launch { margin-left: 1px; stroke: #c9cdd2; fill: none; }
.p-props h2 { position: relative; padding-right: 12px; }
.p-props .launch { position: absolute; right: 4px; }

/* drawing tabs */
.file-tabs { display: flex; height: 31px; padding: 4px 0 0 20px; border-bottom: 3px solid var(--panel); font-size: 12px; }
.file-tab {
    position: relative;
    display: flex;
    align-items: center;
    justify-content: space-between;
    width: 124px;
    padding: 0 14px 0 11px;
    z-index: 0;
}
.file-tab::before, .file-tab::after {
    content: "";
    position: absolute;
    z-index: -1;
    inset: 0 8px 0 4px;
    border-radius: 8px 8px 0 0;
    background: #2c3440;
    transform: skewX(-18deg);
}
.file-tab::after { inset: 0 3px 0 8px; transform: skewX(18deg); }
.file-tab.active { color: #fff; }
.file-tab.active::before, .file-tab.active::after { background: var(--panel); }
.file-tab svg { stroke: #b4b8be; stroke-width: 2; fill: none; }
.add { display: flex; align-items: center; justify-content: center; width: 20px; height: 14px; margin: 5px 0 0 7px; border-radius: 6px; background: #2f3744; stroke: #b4b8be; stroke-width: 2; }

/* model space */
.canvas { position: relative; flex: 1; min-height: 0; overflow: hidden; background: var(--canvas); }
.drawing, .marks { position: absolute; inset: 0; }
.marks { pointer-events: none; }
.ln, .ln path { fill: none; stroke: #f0f0f0; }
.ln .cl { stroke-dasharray: 28 5 2 5; }
.hatch { fill: none; stroke: #00f0f0; stroke-width: 2; }
.dim-ln { fill: none; stroke: #00e800; }
.cn { fill: #fff; font-family: var(--cjk); }
.dimtx { fill: #fff; font: italic 12px "Open Sans", sans-serif; }
.view-label { padding: 6px 3px; color: #f0f0f0; position: relative; }

/* options dialog */
.dialog {
    position: absolute;
    left: 403px;
    top: 84px;
    width: 718px;
    padding: 0 7px 5px 5px;
    border: 1px solid #10151b;
    border-radius: 7px;
    background:
        linear-gradient(90deg, #858a92 0, #606873 90px, #2b343f 210px, #26303b 440px, #5d646d 570px, #8c9299 100%) 0 0 / 100% 28px no-repeat,
        linear-gradient(#858a92 0, #a8adb3 153px, #27313c 155px, #2b3541 100%);
    box-shadow: inset 0 0 0 1px #aab1b9, 0 0 12px 3px #000;
    color: #000;
    font: 12px/16px var(--cjk);
}
.dialog i { font: 10px/10px "Liberation Mono", monospace; white-space: pre; }
.dlg-head { display: flex; align-items: center; gap: 5px; height: 28px; padding-left: 1px; }
.dlg-head span { text-shadow: 0 0 8px #fff, 0 0 12px #ddd; }
.close {
    display: flex;
    align-items: center;
    justify-content: center;
    width: 48px;
    height: 19px;
    margin: 0 -2px 8px auto;
    border: 1px solid #e4cfca;
    border-top: 0;
    border-radius: 0 0 5px 5px;
    background: linear-gradient(#dfa093, #c9695a 45%, #a92a13 50%, #cf6a50);
}
.dlg-body { padding: 2px 12px 7px; background: #f0f0f0; border: 1px solid #10151b; }
.config { display: grid; grid-template-columns: 108px 264px 21px 112px auto; align-items: center; height: 19px; }
.dlg-tabs { display: flex; align-items: flex-end; height: 23px; padding-left: 2px; }
.dlg-tabs button {
    height: 18px;
    padding: 0 0 1px 4px;
    border: 1px solid #8b8f98;
    border-bottom: 0;
    border-left-color: #fff;
    background: linear-gradient(#f3f3f3, #ebebeb 50%, #dadada 55%, #cfcfcf);
    text-align: left;
    line-height: 16px;
    white-space: nowrap;
    overflow: hidden;
}
.dlg-tabs .mid { padding-left: 11px; border-left-color: #8b8f98; }
.dlg-tabs .sel { height: 21px; padding-bottom: 3px; background: #fff; }
.w46 { width: 46px; }
.w48 { width: 48px; }
.w58 { width: 58px; }
.w70 { width: 70px; }
.w82 { width: 82px; }
.dlg-panel {
    display: grid;
    grid-template-columns: 1fr 1fr;
    gap: 12px;
    padding: 8px 17px 41px 11px;
    border: 1px solid #828790;
    background: #fff;
}
.stack { display: flex; flex-direction: column; gap: 8px; }
fieldset { margin: 0; min-width: 0; border: 1px solid #d5dfe5; border-radius: 4px; padding: 0 11px; }
legend { margin-left: -5px; padding: 0 2px; height: 16px; }
fieldset label { display: flex; align-items: center; height: 21px; }
fieldset label i { padding-top: 2px; }
fieldset [type="checkbox"], fieldset [type="radio"] {
    appearance: none;
    width: 13px;
    height: 13px;
    margin-right: 2px;
    border: 1px solid #8e8f8f;
    background: linear-gradient(135deg, #cfd3d8, #f6f6f6);
    box-shadow: inset 0 0 0 1px #f4f4f4;
}
fieldset [type="checkbox"]:checked::before {
    content: "";
    display: block;
    width: 9px;
    height: 9px;
    margin: 1px;
    background: #39539c;
    clip-path: polygon(0 45%, 20% 40%, 40% 65%, 75% 0, 100% 0, 50% 100%, 35% 100%);
}
fieldset [type="radio"] { border-radius: 50%; margin-right: 3px; }
fieldset [type="radio"]:checked { background: radial-gradient(circle at 45% 40%, #5fd0f5 0, #1b5f8f 3px, #123a5c 4px, #eee 5px); }
.g-snap { padding-top: 1px; padding-bottom: 16px; }
.g-snap label { height: 22px; }
.g-track { padding-top: 3px; padding-bottom: 8px; }
.g-track label { height: 18px; }
.g-align { padding-top: 2px; padding-bottom: 3px; }
.g-osnap { padding-top: 8px; padding-bottom: 2px; }
.g-size { display: flex; gap: 14px; align-items: center; padding: 12px 50px 11px 9px; }
.g-size legend { margin-left: -3px; }
.g-size.apert { padding-left: 12px; }
.g-size.apert legend { margin-left: -6px; }
.g-size input { appearance: none; flex: 1; min-width: 0; height: 22px; background: none; }
.g-size input::-webkit-slider-runnable-track { height: 4px; border: 1px solid #e7eaea; border-top-color: #b0b0b0; background: #e7eaea; }
.g-size input::-webkit-slider-thumb {
    appearance: none;
    width: 11px;
    height: 21px;
    margin-top: -9px;
    border: 1px solid #707070;
    border-radius: 2px;
    background: linear-gradient(90deg, #f6f6f6, #d0d0d0);
}
.btn {
    height: 20px;
    border: 1px solid #707070;
    border-radius: 3px;
    background: linear-gradient(#f2f2f2, #ebebeb 50%, #dddddd 50%, #cfcfcf);
    box-shadow: inset 0 0 0 1px #fcfcfc;
    padding-bottom: 2px;
    line-height: 16px;
}
.color { display: block; width: 79px; margin: 12px 0 0 1px; }
.links { display: flex; flex-direction: column; gap: 14px; padding: 7px 31px 0 1px; }
.links .btn { text-align: left; padding: 0 7px 2px; }
.dlg-foot { display: flex; justify-content: flex-end; gap: 8px; padding-top: 11px; margin-right: -1px; }
.dlg-foot .btn { width: 73px; }
.dlg-foot .ok { border-color: #3c7fb1; background: linear-gradient(#eaf6fd, #d9f0fc 50%, #bee6fd 50%, #a7d9f5); box-shadow: inset 0 0 0 2px #2fc4f2; }

/* callouts */
.num { fill: #fff; font: 13px "Open Sans", sans-serif; text-anchor: middle; }
.tip {
    position: absolute;
    padding: 0 13px 0 5px;
    border-radius: 4px;
    background: rgba(0, 0, 0, .6);
    color: #fff;
    font-size: 16px;
    line-height: 34px;
}
.tip::before {
    content: "";
    position: absolute;
    right: 100%;
    top: 13px;
    border: 4px solid transparent;
    border-left: 0;
    border-right: 5px solid rgba(0, 0, 0, .6);
}
.t1 { left: 925px; top: 250px; }
.t2 { left: 596px; top: 278px; }
.t3 { left: 680px; top: 455px; }
.t4 { left: 896px; top: 514px; }

/* command line */
.command { display: flex; height: 64px; border-top: 2px solid var(--panel); }
.cmd-side { display: flex; flex-direction: column; align-items: center; gap: 7px; width: 24px; padding: 4px 2px 0 0; background: #2e3542; }
.cmd-main { flex: 1; display: flex; flex-direction: column; border-left: 1px solid #1c222a; }
.history { height: 43px; padding: 5px 2px; background: #c8c8c8; color: #000; font: 16px/18px "Liberation Sans", "Noto Sans CJK SC", sans-serif; border-bottom: 1px solid #1c222a; }
.history p { height: 18px; }
.history i { font: 13px/13px "Liberation Mono", monospace; }
.prompt { display: flex; align-items: center; flex: 1; padding: 5px 3px 0; background: #f00; }
.prompt .caret { margin: 0 9px 0 3px; border-top-color: #933; }
.prompt input { flex: 1; padding: 2px 0 0; border: 0; background: none; color: #fff; font: 13px/16px "Liberation Mono", monospace; }
```
